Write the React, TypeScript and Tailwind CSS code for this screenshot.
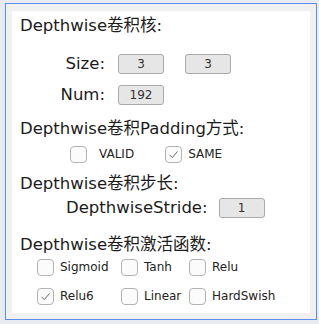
const font = "font-['DejaVu_Sans','Noto_Sans_CJK_SC',sans-serif]";

function Box({ value }: { value: string }) {
  return (
    <div className="flex h-[20px] w-[46px] items-center justify-center rounded-[3px] border border-[#a9a9a9] bg-[#e6e6e6] text-[12px] text-[#333]">
      {value}
    </div>
  );
}

function Check({ checked }: { checked?: boolean }) {
  return (
    <div className="flex h-[17px] w-[17px] shrink-0 items-center justify-center rounded-[4px] border border-[#b3b3b3] bg-[#fbfbfb]">
      {checked && (
        <svg width="11" height="11" viewBox="0 0 11 11" fill="none">
          <path d="M1.5 5.8 L4.3 8.6 L9.6 2.4" stroke="#6b6b6b" strokeWidth="1" />
        </svg>
      )}
    </div>
  );
}

function Option({ label, checked }: { label: string; checked?: boolean }) {
  return (
    <div className="flex items-center gap-[6px]">
      <Check checked={checked} />
      <span className="text-[12px] text-[#222]">{label}</span>
    </div>
  );
}

function Title({ text }: { text: string }) {
  return (
    <div className="flex h-[20px] items-center pl-[8px] text-[16.5px] leading-[20px] text-[#1b1b1b]">
      {text}
    </div>
  );
}

export default function App() {
  return (
    <div className={`h-[324px] w-[319px] bg-[#e8ecf2] pl-[5px] pt-[3px] ${font}`}>
      <div className="h-[317px] w-[312px] border border-[#5a8ded] bg-[#f0f0f0] p-[6px] pt-[7px] pb-[5px]">
        <div className="flex h-[302px] w-[298px] flex-col bg-white pt-[5px] text-[#1b1b1b]">
          <Title text="Depthwise卷积核:" />

          <div className="mt-[18px] flex h-[20px] items-center">
            <div className="w-[93px] text-right text-[16.5px]">Size:</div>
            <div className="ml-[13px]"><Box value="3" /></div>
            <div className="ml-[21px]"><Box value="3" /></div>
          </div>

          <div className="mt-[11px] flex h-[20px] items-center">
            <div className="w-[93px] text-right text-[16.5px]">Num:</div>
            <div className="ml-[13px]"><Box value="192" /></div>
          </div>

          <div className="mt-[14px]">
            <Title text="Depthwise卷积Padding方式:" />
          </div>

          <div className="mt-[6px] flex h-[18px] items-center pl-[58px]">
            <Check />
            <span className="ml-[12px] text-[12px] text-[#222]">VALID</span>
            <div className="ml-[31px]">
              <Option label="SAME" checked />
            </div>
          </div>

          <div className="mt-[11px]">
            <Title text="Depthwise卷积步长:" />
          </div>

          <div className="mt-[3px] flex h-[22px] items-center pl-[54px]">
            <div className="text-[16.5px]">DepthwiseStride:</div>
            <div className="ml-[11px]"><Box value="1" /></div>
          </div>

          <div className="mt-[16px]">
            <Title text="Depthwise卷积激活函数:" />
          </div>

          <div className="mt-[3px] grid grid-cols-[84px_68px_1fr] pl-[25px]">
            <div className="flex h-[18px] items-center"><Option label="Sigmoid" /></div>
            <div className="flex h-[18px] items-center"><Option label="Tanh" /></div>
            <div className="flex h-[18px] items-center"><Option label="Relu" /></div>
            <div className="mt-[11px] flex h-[18px] items-center"><Option label="Relu6" checked /></div>
            <div className="mt-[11px] flex h-[18px] items-center"><Option label="Linear" /></div>
            <div className="mt-[11px] flex h-[18px] items-center"><Option label="HardSwish" /></div>
          </div>
        </div>
      </div>
    </div>
  );
}
